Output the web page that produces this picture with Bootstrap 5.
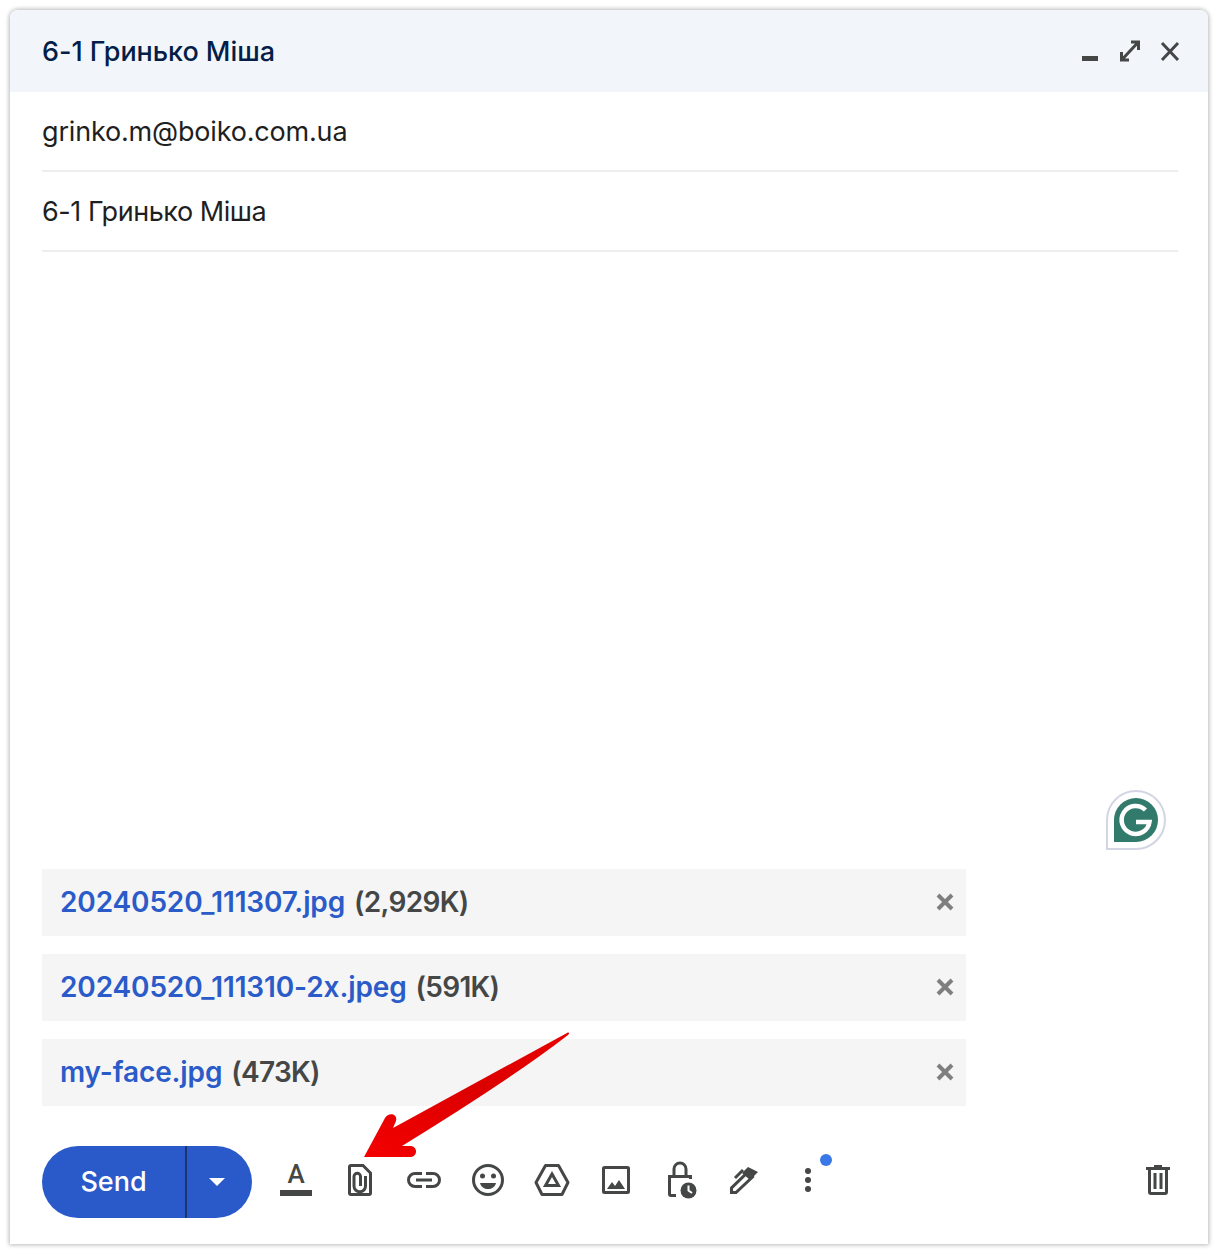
<!DOCTYPE html>
<html lang="uk">
<head>
  <meta charset="UTF-8" />
  <title>6-1 Гринько Міша</title>
  <link href="https://cdn.jsdelivr.net/npm/bootstrap@5.3.3/dist/css/bootstrap.min.css" rel="stylesheet">
  <style>
    html, body { height: 100%; }
    body { background: #fff; padding: 10px; font-family: "Inter", "Noto Sans", sans-serif; overflow: hidden; }
    .compose { height: 1234px; width: 1198px; border-radius: 8px 8px 0 0; box-shadow: 0 0 4px 1px rgba(0,0,0,.28); position: relative; background: #fff; }
    .compose-head { height: 82px; background: #f2f6fb; padding: 0 28px 0 32px; border-radius: 8px 8px 0 0; }
    .compose-title { font-size: 27px; font-weight: 500; color: #041e49; letter-spacing: -.05px; margin-top: 2px; }
    .compose-field { height: 80px; margin: 0 30px 0 32px; border-bottom: 2px solid #eeeeee; font-size: 27px; color: #1f1f1f; letter-spacing: -.18px; padding-top: 2px; }
    .field-subject { letter-spacing: -.45px; }
    .compose-body { padding: 0 32px; }
    .attach { width: 924px; height: 67px; background: #f5f5f5; padding: 0 11px 0 18px; font-size: 28px; font-weight: 600; margin-bottom: 18px; }
    .attach a { color: #2a5bc9; text-decoration: none; letter-spacing: -.13px; }
    .attach span { color: #444746; margin-left: 9px; letter-spacing: -.7px; }
    .attach-x { margin-top: -2px; }
    .attach-name { margin-top: -1px; }
    .head-btns { gap: 20px; }
    .compose-foot { padding: 0 26px 26px 32px; margin-top: 22px; }
    .send-btn { height: 72px; width: 210px; background: #2a5ac9; border-radius: 36px; color: #fff; }
    .send-btn .btn { color: #fff; border: 0; background: transparent; border-radius: 0; padding: 0; flex: none; }
    .send-main { width: 145px; font-size: 27px; font-weight: 500; border-right: 2px solid #1c3372 !important; }
    .send-btn .send-more { width: 65px; padding-right: 3px; }
    .tool-row { margin-left: 20px; gap: 16px; margin-bottom: 4px; }
    .tool-btn { width: 48px; height: 48px; display: block; flex: none; overflow: visible; }
    .tool-trash { margin-bottom: 4px; }
    .tool-btn text { font-family: "Roboto", sans-serif; font-size: 26px; font-weight: 500; fill: #444746; }
    .gly { fill: none; stroke: #444746; stroke-width: 3; }
    .gly-fill { fill: #444746; }
    .overlay-mark { position: absolute; }
    .grammarly-mark { left: 1096px; top: 780px; width: 60px; height: 60px; }
    .arrow-mark { left: 350px; top: 1020px; width: 225px; height: 145px; }
  </style>
</head>
<body>
  <div class="compose d-flex flex-column">
    <div class="compose-head d-flex align-items-center justify-content-between">
      <div class="compose-title">6-1 Гринько Міша</div>
      <div class="d-flex align-items-center head-btns">
        <svg width="20" height="24" viewBox="0 0 20 24"><rect class="gly-fill" x="2" y="17" width="16" height="5"/></svg>
        <svg width="20" height="24" viewBox="0 0 20 24"><path class="gly" d="M1.500 22V13M0 21H9M18.500 2V11M20 3H11M3 19.500L17 4.500"/></svg>
        <svg width="20" height="24" viewBox="0 0 20 24"><path class="gly" d="M2 4L18 21M18 4L2 21"/></svg>
      </div>
    </div>
    <div class="compose-field d-flex align-items-center">grinko.m@boiko.com.ua</div>
    <div class="compose-field field-subject d-flex align-items-center">6-1 Гринько Міша</div>

    <div class="flex-grow-1"></div>

    <div class="compose-body">
      <div class="attach d-flex align-items-center justify-content-between">
        <div class="attach-name"><a href="#">20240520_111307.jpg</a><span>(2,929K)</span></div>
        <svg class="attach-x" width="20" height="20" viewBox="0 0 20 20"><path d="M3 3L17 17M17 3L3 17" fill="none" stroke="#7f7f7f" stroke-width="4"/></svg>
      </div>
      <div class="attach d-flex align-items-center justify-content-between">
        <div class="attach-name"><a href="#">20240520_111310-2x.jpeg</a><span>(591K)</span></div>
        <svg class="attach-x" width="20" height="20" viewBox="0 0 20 20"><path d="M3 3L17 17M17 3L3 17" fill="none" stroke="#7f7f7f" stroke-width="4"/></svg>
      </div>
      <div class="attach d-flex align-items-center justify-content-between">
        <div class="attach-name"><a href="#">my-face.jpg</a><span>(473K)</span></div>
        <svg class="attach-x" width="20" height="20" viewBox="0 0 20 20"><path d="M3 3L17 17M17 3L3 17" fill="none" stroke="#7f7f7f" stroke-width="4"/></svg>
      </div>
    </div>

    <div class="compose-foot d-flex align-items-center justify-content-between">
      <div class="d-flex align-items-center">
        <div class="btn-group send-btn">
          <button class="btn send-main">Send</button>
          <button class="btn send-more d-flex align-items-center justify-content-center">
            <svg width="16" height="8" viewBox="0 0 16 8"><path d="M0 0H16L8 8Z" fill="#fff"/></svg>
          </button>
        </div>
        <div class="d-flex align-items-center tool-row">
          <!-- format -->
          <svg class="tool-btn" viewBox="0 0 48 48"><text x="24" y="27" text-anchor="middle">A</text><rect class="gly-fill" x="8" y="34" width="32" height="6"/></svg>
          <!-- attach -->
          <svg class="tool-btn" viewBox="0 0 48 48"><path class="gly" d="M15 9.500H27L34.500 17V37a1.500 1.500 0 0 1-1.500 1.500H15a1.500 1.500 0 0 1-1.500-1.500V11a1.500 1.500 0 0 1 1.500-1.500Z"/><path class="gly" stroke-width="2.200" d="M29.500 20V30a5.750 5.750 0 0 1-11.500 0V20.500a3.250 3.250 0 0 1 6.500 0V30"/></svg>
          <!-- link -->
          <svg class="tool-btn" viewBox="0 0 48 48"><path class="gly" d="M22 17.500H15a6.500 6.500 0 0 0 0 13H22M26 17.500H33a6.500 6.500 0 0 1 0 13H26M16 24H32"/></svg>
          <!-- emoji -->
          <svg class="tool-btn" viewBox="0 0 48 48"><circle class="gly" cx="24" cy="24" r="14.500"/><circle class="gly-fill" cx="18.500" cy="20" r="2.500"/><circle class="gly-fill" cx="29.500" cy="20" r="2.500"/><path class="gly-fill" d="M16 27H32C31 31 27.500 33 24 33S17 31 16 27Z"/></svg>
          <!-- drive -->
          <svg class="tool-btn" viewBox="0 0 48 48"><path class="gly" d="M17.500 9.500H30.500L40 26.500L34 38.500H14L8 26.500Z" stroke-linejoin="round"/><path class="gly" stroke-width="3.500" d="M24 18L30.500 29.500H17.500Z"/></svg>
          <!-- image -->
          <svg class="tool-btn" viewBox="0 0 48 48"><rect class="gly" x="11.500" y="11.500" width="25" height="25" rx="1"/><path class="gly-fill" d="M15 33L20 26L23 30L27 24L33 33Z"/></svg>
          <!-- confidential -->
          <svg class="tool-btn" viewBox="0 0 48 48"><path class="gly" d="M20 39.500H15a1.500 1.500 0 0 1-1.500-1.500V20.500H34.500V23M18 20V13a6 6 0 0 1 12 0V20"/><circle class="gly-fill" cx="32.500" cy="34.500" r="8"/><path d="M32.500 29.500V34.500L36 37" fill="none" stroke="#fff" stroke-width="2"/></svg>
          <!-- signature -->
          <svg class="tool-btn" viewBox="0 0 48 48"><path class="gly" stroke-width="2.500" d="M11.500 36.500V32L28 16L32.500 21L16 36.500Z"/><path class="gly-fill" d="M28 11L38 16L30 24L22 17Z"/><path class="gly" stroke-width="2.500" d="M15 22L23 14"/></svg>
          <!-- more -->
          <svg class="tool-btn" viewBox="0 0 48 48"><circle class="gly-fill" cx="24" cy="15" r="3"/><circle class="gly-fill" cx="24" cy="24" r="3"/><circle class="gly-fill" cx="24" cy="33" r="3"/><circle cx="42" cy="4" r="6" fill="#3b78e7"/></svg>
        </div>
      </div>
      <svg class="tool-btn tool-trash" viewBox="0 0 48 48"><path class="gly" d="M12 12.500H36M15.500 12.500V36a1.500 1.500 0 0 0 1.500 1.500H31a1.500 1.500 0 0 0 1.500-1.500V12.500"/><rect class="gly-fill" x="20" y="9" width="8" height="3"/><path class="gly" d="M21 17V33M27 17V33"/></svg>
    </div>

    <!-- grammarly badge -->
    <svg class="overlay-mark grammarly-mark" viewBox="0 0 60 60">
      <path d="M1 59V30a29 29 0 1 1 29 29Z" fill="#fff" stroke="#d3d5e4" stroke-width="2"/>
      <path d="M8 52V30a22 22 0 1 1 22 22Z" fill="#327a6c"/>
      <path d="M39.500 20a14 14 0 1 0 4 12H30" fill="none" stroke="#fff" stroke-width="4.500"/>
    </svg>
    <!-- red arrow -->
    <svg class="overlay-mark arrow-mark" viewBox="0 0 225 145">
      <defs><linearGradient id="arrowFill" x1="0" y1="1" x2="1" y2="0"><stop offset="0" stop-color="#f40000"/><stop offset=".55" stop-color="#dc0000"/><stop offset="1" stop-color="#e80000"/></linearGradient></defs>
      <path d="M4 127L25 88C28 82 38 83 36 91L33 98L207 3C209 2 210 3 208 5C160 42 100 80 42 116H50C58 116 58 127 50 127Z" fill="url(#arrowFill)"/>
    </svg>
  </div>
</body>
</html>
